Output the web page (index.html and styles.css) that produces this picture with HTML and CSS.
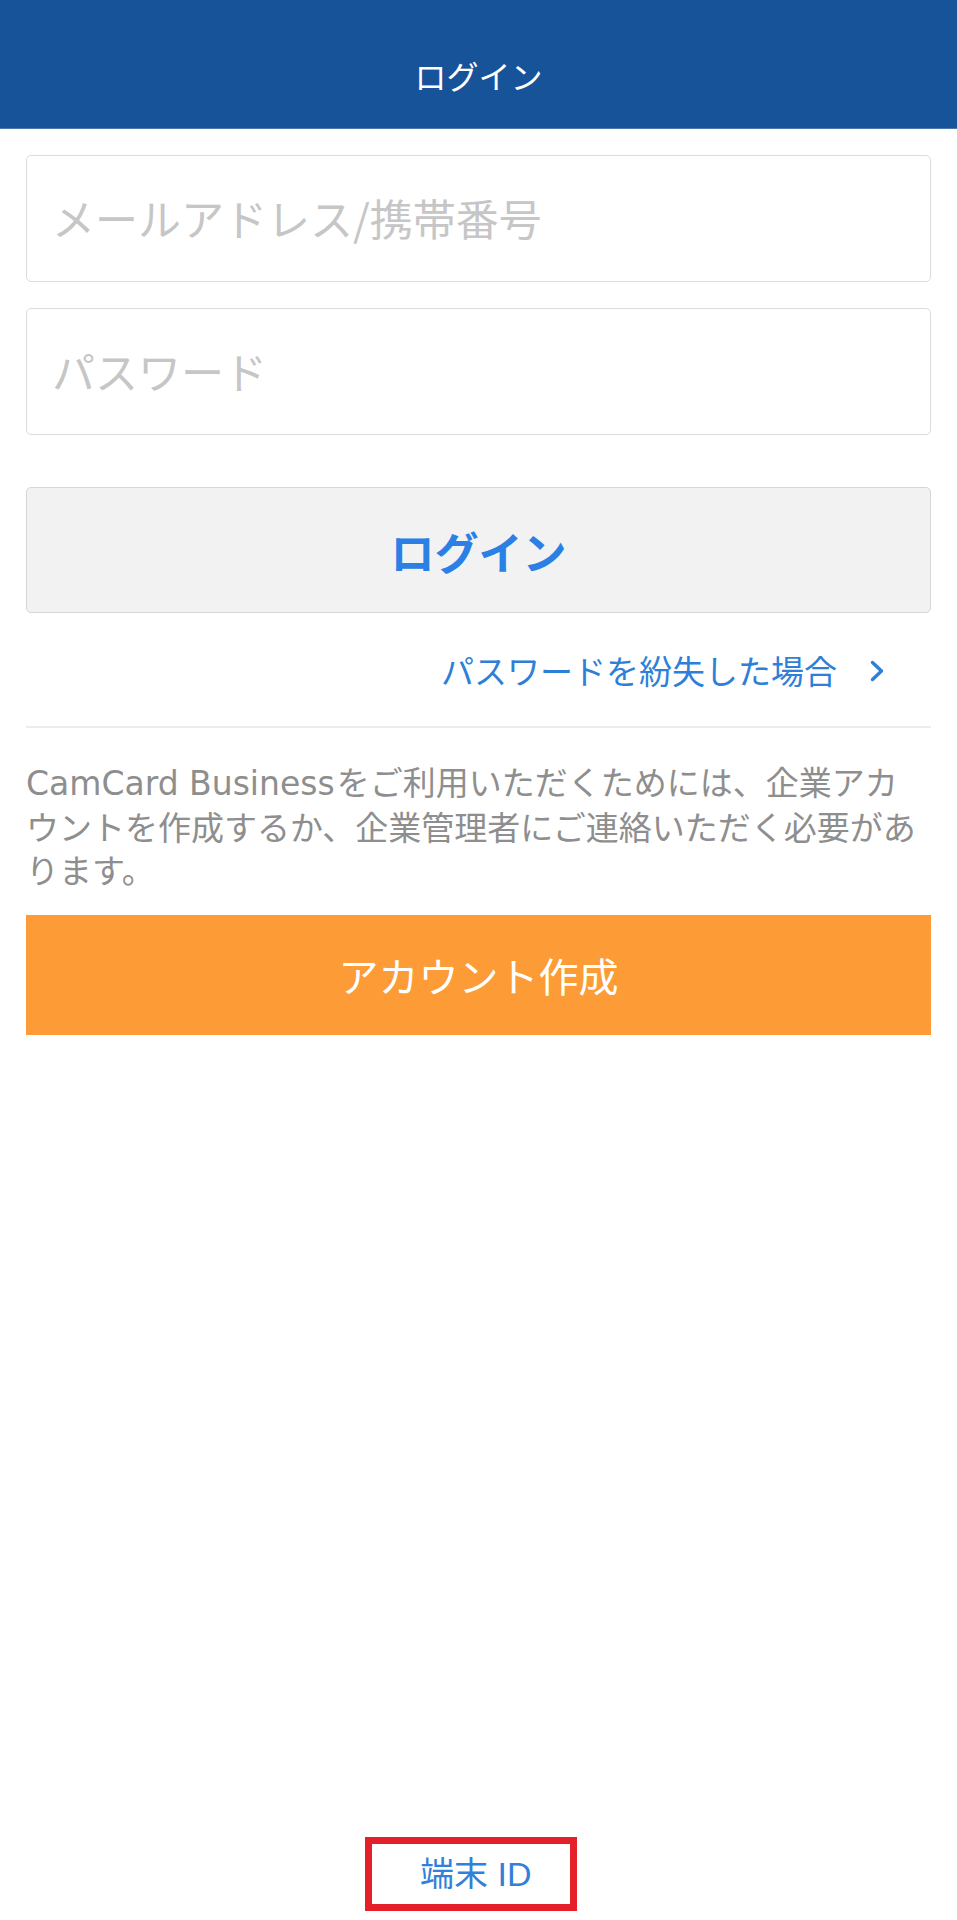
FILE: index.html
```html
<!DOCTYPE html>
<html lang="ja">
<head>
<meta charset="utf-8">
<title>ログイン</title>
<link rel="stylesheet" href="styles.css">
</head>
<body>
<div class="page">
  <header class="topbar">
    <h1 class="topbar-title">ログイン</h1>
  </header>
  <main class="content">
    <div class="field"><input class="field-input" type="text" placeholder="メールアドレス/携帯番号"></div>
    <div class="field field-second"><input class="field-input" type="password" placeholder="パスワード"></div>
    <button class="login-btn" type="button">ログイン</button>
    <div class="forgot-row">
      <a class="forgot-link" href="#">パスワードを紛失した場合</a>
      <svg class="chevron" width="16" height="24" viewBox="0 0 16 24"><polyline points="3.5,3.5 12.5,12 3.5,20.5" fill="none" stroke="#2f7fd8" stroke-width="3.4" stroke-linecap="round" stroke-linejoin="round"/></svg>
    </div>
    <div class="divider"></div>
    <p class="info"><span class="latin">CamCard Business</span>をご利用いただくためには、企業アカ<br>ウントを作成するか、企業管理者にご連絡いただく必要があ<br>ります。</p>
    <button class="create-btn" type="button">アカウント作成</button>
  </main>
  <footer class="footer">
    <a class="device-id" href="#">端末 ID</a>
  </footer>
</div>
</body>
</html>
```

FILE: styles.css
```css
* { box-sizing: border-box; }
html, body { margin: 0; padding: 0; background: #ffffff; }
body {
  font-family: "Liberation Sans", "Noto Sans CJK JP", sans-serif;
}
.page {
  min-height: 1920px;
  display: flex;
  flex-direction: column;
}
.topbar {
  height: 129px;
  background: #175399;
  border-bottom: 1px solid #4a76aa;
  display: flex;
  align-items: center;
  justify-content: center;
}
.topbar-title {
  margin: 0;
  padding-top: 21px;
  font-family: "Noto Sans CJK JP", sans-serif;
  font-weight: 400;
  font-size: 32px;
  line-height: 40px;
  color: #ffffff;
}
.content {
  padding: 26px 26px 0 26px;
  display: flex;
  flex-direction: column;
}
.field {
  height: 127px;
  border: 1px solid #dcdcdc;
  border-radius: 5px;
  display: flex;
  align-items: center;
  padding: 0 0 0 25px;
}
.field-second { margin-top: 26px; }
.field-input {
  border: none;
  outline: none;
  width: 100%;
  background: transparent;
  font-family: "Noto Sans CJK JP", sans-serif;
  font-size: 43px;
  color: #333;
  padding: 0;
  margin-top: -4px;
}
.field-input::placeholder { color: #c6c6c6; }
.login-btn {
  margin-top: 52px;
  height: 126px;
  background: #f2f2f2;
  border: 1px solid #d6d6d6;
  border-radius: 5px;
  font-family: "Noto Sans CJK JP", sans-serif;
  font-weight: 700;
  font-size: 44px;
  color: #2a80e4;
  padding: 0;
  padding-top: 1px;
}
.forgot-row {
  margin-top: 37px;
  height: 40px;
  display: flex;
  align-items: center;
  justify-content: flex-end;
  gap: 32px;
  padding-right: 46px;
}
.forgot-link {
  font-family: "Noto Sans CJK JP", sans-serif;
  font-size: 33px;
  line-height: 40px;
  color: #2f7fd8;
  text-decoration: none;
}
.chevron { display: block; margin-top: 2px; }
.divider {
  margin-top: 36px;
  height: 2px;
  background: #ececec;
}
.info {
  margin: 32px 0 0 0;
  font-family: "Noto Sans CJK JP", sans-serif;
  font-size: 33px;
  line-height: 43px;
  color: #8e8e8e;
  white-space: nowrap;
}
.latin {
  font-family: "DejaVu Sans", sans-serif;
  margin-right: 2px;
}
.create-btn {
  margin-top: 24px;
  height: 120px;
  background: #fd9b36;
  border: none;
  border-radius: 0;
  font-family: "Noto Sans CJK JP", sans-serif;
  font-weight: 400;
  font-size: 40px;
  color: #ffffff;
  padding: 0;
}
.footer {
  margin-top: auto;
  padding-bottom: 9px;
  display: flex;
  justify-content: center;
}
.device-id {
  width: 212px;
  height: 74px;
  margin-right: 15px;
  border: 7px solid #e4202a;
  display: flex;
  align-items: center;
  padding-left: 48px;
  font-size: 34px;
  line-height: 40px;
  color: #3180d9;
  text-decoration: none;
}
```
